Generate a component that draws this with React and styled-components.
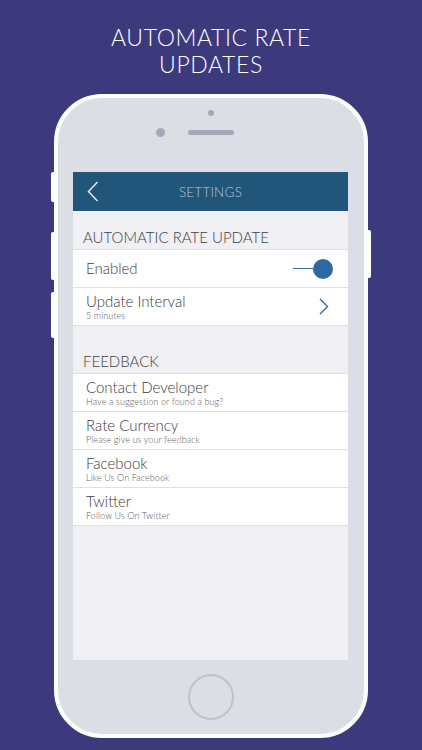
import React from "react";
import styled, { createGlobalStyle } from "styled-components";

const GlobalStyle = createGlobalStyle`
  html, body {
    margin: 0;
    padding: 0;
    background: #3c3a7d;
  }
  body {
    font-family: "Lato", "Liberation Sans", sans-serif;
  }
`;

const Page = styled.div`
  width: 422px;
  height: 750px;
  overflow: hidden;
  display: flex;
  flex-direction: column;
  align-items: center;
  background: #3c3a7d;
`;

const Headline = styled.h1`
  margin: 24px 0 0;
  font-family: "Lato", "Liberation Sans", sans-serif;
  font-weight: 300;
  font-size: 23px;
  line-height: 27px;
  letter-spacing: 0.6px;
  color: #ffffff;
  text-align: center;
`;

const Phone = styled.div`
  position: relative;
  margin-top: 16px;
  width: 306px;
  height: 636px;
  border: 4px solid #ffffff;
  border-radius: 48px;
  background: #dcdee6;
  display: flex;
  flex-direction: column;
  align-items: center;
`;

const SideKey = styled.span`
  position: absolute;
  width: 4px;
  background: #ffffff;
  top: ${(p) => p.$top}px;
  height: ${(p) => p.$h}px;
  ${(p) => (p.$right ? "right: -7px;" : "left: -7px;")}
  border-radius: ${(p) => (p.$right ? "0 2px 2px 0" : "2px 0 0 2px")};
`;

const TopArea = styled.div`
  height: 74px;
  width: 100%;
  display: flex;
  flex-direction: column;
  align-items: center;
  padding-top: 12px;
  box-sizing: border-box;
`;

const Sensor = styled.span`
  width: 6px;
  height: 6px;
  border-radius: 50%;
  background: #a5a8b8;
`;

const SpeakerRow = styled.div`
  margin-top: 12px;
  width: 100%;
  display: grid;
  grid-template-columns: 1fr auto 1fr;
  align-items: center;
`;

const Camera = styled.span`
  justify-self: end;
  margin-right: 23px;
  width: 9px;
  height: 9px;
  border-radius: 50%;
  background: #a5a8b8;
`;

const Speaker = styled.span`
  width: 46px;
  height: 5px;
  border-radius: 3px;
  background: #a5a8b8;
`;

const Screen = styled.div`
  width: 275px;
  height: 488px;
  margin-left: -1px;
  background: #efeff4;
  display: flex;
  flex-direction: column;
`;

const NavBar = styled.div`
  height: 39px;
  background: #22557a;
  display: grid;
  grid-template-columns: 40px 1fr 40px;
  align-items: center;
`;

const BackBtn = styled.div`
  display: flex;
  align-items: center;
  padding-left: 14px;
`;

const NavTitle = styled.div`
  text-align: center;
  font-weight: 300;
  font-size: 13.5px;
  letter-spacing: 0.2px;
  color: #b4c5d3;
`;

const SectionTitle = styled.div`
  height: 39px;
  box-sizing: border-box;
  display: flex;
  align-items: flex-end;
  padding: 0 0 3px 10px;
  margin-top: ${(p) => p.$gap || 0}px;
  font-weight: 300;
  font-size: 15px;
  color: #3f3f46;
  border-bottom: 1px solid #dfdfe5;
`;

const Group = styled.div`
  background: #ffffff;
  display: flex;
  flex-direction: column;
`;

const Row = styled.div`
  height: 37px;
  box-sizing: content-box;
  display: flex;
  align-items: center;
  padding: 0 15px 0 13px;
  border-bottom: 1px solid #dfdfe5;
`;

const Texts = styled.div`
  flex: 1;
  display: flex;
  flex-direction: column;
  justify-content: center;
`;

const RowTitle = styled.div`
  font-weight: 300;
  font-size: 15px;
  line-height: 17px;
  color: #3b3b40;
`;

const RowSub = styled.div`
  font-weight: 300;
  font-size: 9px;
  line-height: 11px;
  letter-spacing: 0.1px;
  color: #5c5c63;
`;

const Toggle = styled.div`
  display: flex;
  align-items: center;
`;

const ToggleLine = styled.span`
  width: 20px;
  height: 1.5px;
  background: #2d6aa3;
`;

const Knob = styled.span`
  width: 20px;
  height: 20px;
  border-radius: 50%;
  background: #2d6aa3;
`;

const Chevron = styled.svg`
  display: block;
  margin-right: 4px;
`;

const BottomArea = styled.div`
  flex: 1;
  width: 100%;
  display: flex;
  align-items: center;
  justify-content: center;
`;

const HomeButton = styled.span`
  width: 42px;
  height: 42px;
  border-radius: 50%;
  border: 2px solid #bfc1cb;
`;

const feedback = [
  { title: "Contact Developer", sub: "Have a suggestion or found a bug?" },
  { title: "Rate Currency", sub: "Please give us your feedback" },
  { title: "Facebook", sub: "Like Us On Facebook" },
  { title: "Twitter", sub: "Follow Us On Twitter" },
];

export default function App() {
  return (
    <Page>
      <GlobalStyle />
      <Headline>
        AUTOMATIC RATE
        <br />
        UPDATES
      </Headline>
      <Phone>
        <SideKey $top={74} $h={30} />
        <SideKey $top={134} $h={48} />
        <SideKey $top={194} $h={46} />
        <SideKey $right $top={132} $h={48} />
        <TopArea>
          <Sensor />
          <SpeakerRow>
            <Camera />
            <Speaker />
            <span />
          </SpeakerRow>
        </TopArea>
        <Screen>
          <NavBar>
            <BackBtn>
              <svg width="12" height="21" viewBox="0 0 12 21">
                <path d="M10.5 1 L1.5 10.5 L10.5 20" fill="none" stroke="#e6edf3" strokeWidth="1.5" />
              </svg>
            </BackBtn>
            <NavTitle>SETTINGS</NavTitle>
            <span />
          </NavBar>
          <SectionTitle>AUTOMATIC RATE UPDATE</SectionTitle>
          <Group>
            <Row>
              <Texts>
                <RowTitle>Enabled</RowTitle>
              </Texts>
              <Toggle>
                <ToggleLine />
                <Knob />
              </Toggle>
            </Row>
            <Row>
              <Texts>
                <RowTitle>Update Interval</RowTitle>
                <RowSub>5 minutes</RowSub>
              </Texts>
              <Chevron width="10" height="17" viewBox="0 0 10 17">
                <path d="M1 1 L8.5 8.5 L1 16" fill="none" stroke="#3a6c9c" strokeWidth="1.4" />
              </Chevron>
            </Row>
          </Group>
          <SectionTitle $gap={9}>FEEDBACK</SectionTitle>
          <Group>
            {feedback.map((f) => (
              <Row key={f.title}>
                <Texts>
                  <RowTitle>{f.title}</RowTitle>
                  <RowSub>{f.sub}</RowSub>
                </Texts>
              </Row>
            ))}
          </Group>
        </Screen>
        <BottomArea>
          <HomeButton />
        </BottomArea>
      </Phone>
    </Page>
  );
}
